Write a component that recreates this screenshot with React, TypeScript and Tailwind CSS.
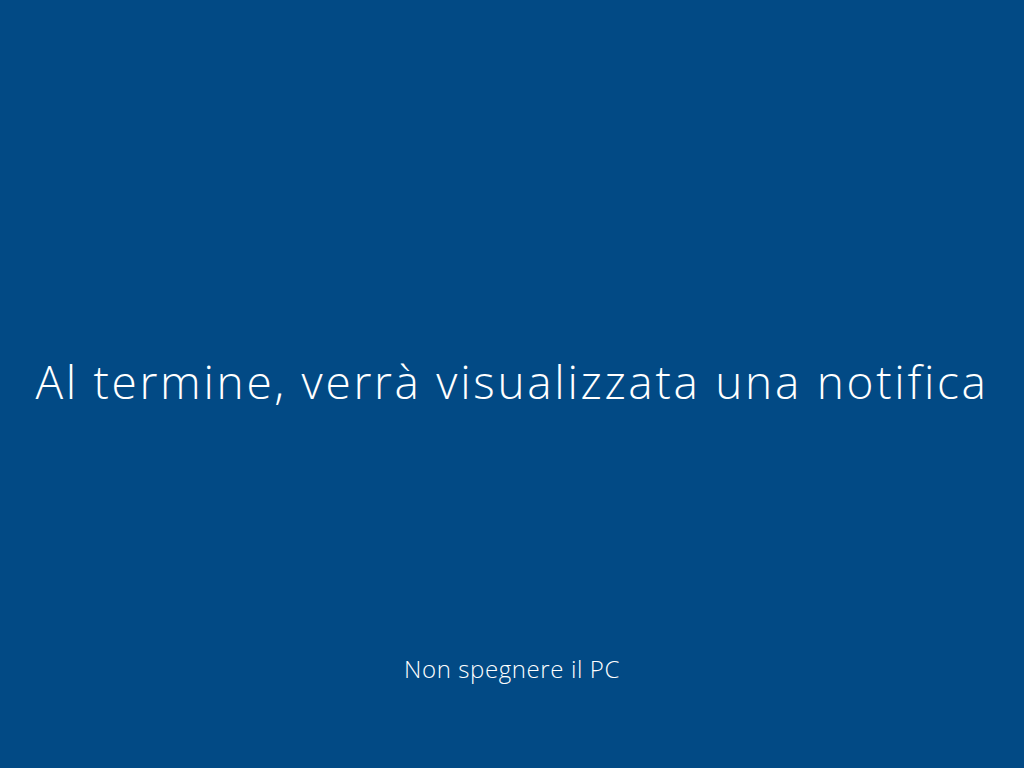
export default function App() {
  return (
    <div
      className="flex h-screen w-full flex-col items-center bg-[#024a85] text-white"
      style={{ fontFamily: '"Open Sans", "Noto Sans", sans-serif' }}
    >
      {/* Main message */}
      <div className="flex flex-1 items-center justify-center pt-[105px]">
        <h1 className="text-[46px] font-light leading-none tracking-[2.7px]">
          Al termine, verrà visualizzata una notifica
        </h1>
      </div>

      {/* Footer hint */}
      <p className="pb-[87px] text-[24px] font-light leading-none tracking-[0.6px]">
        Non spegnere il PC
      </p>
    </div>
  );
}
